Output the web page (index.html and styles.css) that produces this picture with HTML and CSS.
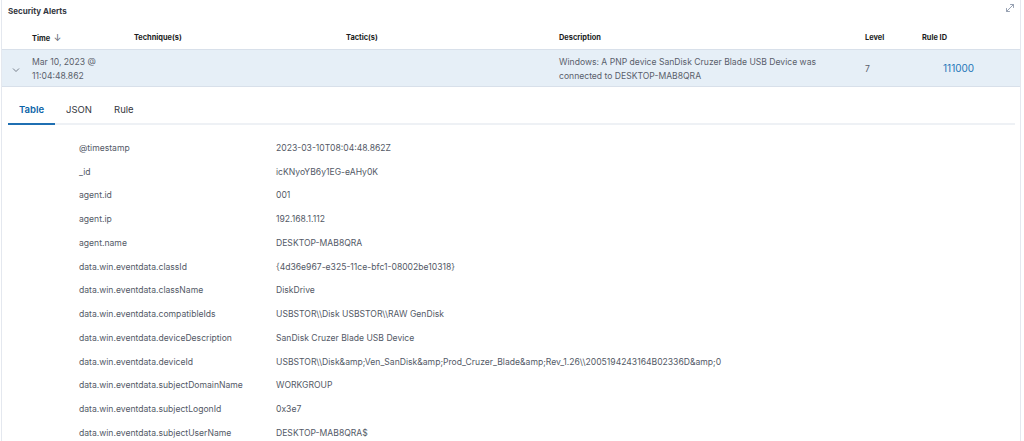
FILE: index.html
```html
<!DOCTYPE html>
<html>
<head>
<meta charset="utf-8">
<link rel="stylesheet" href="styles.css">
</head>
<body>
<div class="panel">
  <div class="panel-head">
    <span class="title">Security Alerts</span>
    <svg class="expand" width="10" height="10" viewBox="0 0 10 10" fill="none" stroke="#98a2b3" stroke-width="1" stroke-linecap="round">
      <path d="M1.5 8.5 L8.5 1.5"/>
      <path d="M5.5 1.5 H8.5 V4.5"/>
      <path d="M1.5 5.5 V8.5 H4.5"/>
    </svg>
  </div>
  <div class="alerts">
    <div class="arow thead">
      <div class="cell"></div>
      <div class="cell">Time <span class="sort">&#8595;</span></div>
      <div class="cell">Technique(s)</div>
      <div class="cell">Tactic(s)</div>
      <div class="cell">Description</div>
      <div class="cell">Level</div>
      <div class="cell">Rule ID</div>
    </div>
    <div class="arow tdata">
      <div class="cell chev">
        <svg width="8" height="6" viewBox="0 0 8 6" fill="none" stroke="#69707d" stroke-width="0.9"><path d="M1 1.5 L4 4.5 L7 1.5"/></svg>
      </div>
      <div class="cell">Mar 10, 2023 @<br>11:04:48.862</div>
      <div class="cell"></div>
      <div class="cell"></div>
      <div class="cell desc">Windows: A PNP device SanDisk Cruzer Blade USB Device was connected to DESKTOP-MAB8QRA</div>
      <div class="cell mid">7</div>
      <div class="cell mid"><span class="link">111000</span></div>
    </div>
  </div>
  <div class="details">
    <div class="tabs">
      <div class="tab active">Table</div>
      <div class="tab">JSON</div>
      <div class="tab">Rule</div>
    </div>
    <div class="kv">
      <div class="kvrow"><span class="k">@timestamp</span><span class="v">2023-03-10T08:04:48.862Z</span></div>
      <div class="kvrow"><span class="k">_id</span><span class="v">icKNyoYB6y1EG-eAHy0K</span></div>
      <div class="kvrow"><span class="k">agent.id</span><span class="v">001</span></div>
      <div class="kvrow"><span class="k">agent.ip</span><span class="v">192.168.1.112</span></div>
      <div class="kvrow"><span class="k">agent.name</span><span class="v">DESKTOP-MAB8QRA</span></div>
      <div class="kvrow"><span class="k">data.win.eventdata.classId</span><span class="v">{4d36e967-e325-11ce-bfc1-08002be10318}</span></div>
      <div class="kvrow"><span class="k">data.win.eventdata.className</span><span class="v">DiskDrive</span></div>
      <div class="kvrow"><span class="k">data.win.eventdata.compatibleIds</span><span class="v">USBSTOR\\Disk USBSTOR\\RAW GenDisk</span></div>
      <div class="kvrow"><span class="k">data.win.eventdata.deviceDescription</span><span class="v">SanDisk Cruzer Blade USB Device</span></div>
      <div class="kvrow"><span class="k">data.win.eventdata.deviceId</span><span class="v">USBSTOR\\Disk&amp;amp;Ven_SanDisk&amp;amp;Prod_Cruzer_Blade&amp;amp;Rev_1.26\\2005194243164B02336D&amp;amp;0</span></div>
      <div class="kvrow"><span class="k">data.win.eventdata.subjectDomainName</span><span class="v">WORKGROUP</span></div>
      <div class="kvrow"><span class="k">data.win.eventdata.subjectLogonId</span><span class="v">0x3e7</span></div>
      <div class="kvrow"><span class="k">data.win.eventdata.subjectUserName</span><span class="v">DESKTOP-MAB8QRA$</span></div>
    </div>
  </div>
</div>
</body>
</html>
```

FILE: styles.css
```css
html, body {
  margin: 0;
  padding: 0;
  background: #ffffff;
}
body {
  font-family: Inter, "Noto Sans", sans-serif;
  color: #535966;
  font-size: 8.6px;
  overflow: hidden;
}
.panel {
  width: 1020px;
  height: 441px;
  margin-left: 1px;
  border-left: 1px solid #e4e8ef;
  border-right: 1px solid #e4e8ef;
  box-sizing: border-box;
  overflow: hidden;
}
.panel-head {
  height: 22px;
  display: flex;
  align-items: center;
  justify-content: space-between;
  padding: 0 5px 0 6px;
}
.title {
  font-weight: 700;
  font-size: 8px;
  color: #343741;
}
.expand {
  margin-top: -6px;
}
.alerts {
  margin-top: 4px;
}
.arow {
  display: grid;
  grid-template-columns: 30px 102px 212px 213px 306px 57px 1fr;
  border-bottom: 1px solid #d8e0ea;
}
.thead {
  height: 23px;
  align-items: center;
  font-weight: 700;
  font-size: 7.4px;
  color: #1a1c21;
}
.sort {
  font-weight: 400;
  font-size: 9px;
  color: #535966;
  margin-left: 2px;
}
.tdata {
  background: #e6eff7;
  height: 37px;
  box-sizing: border-box;
  padding-top: 2px;
  align-items: center;
  line-height: 14px;
  color: #5a606b;
}
.cell {
  min-width: 0;
}
.chev {
  display: flex;
  justify-content: center;
  padding-top: 1px;
  padding-right: 2px;
}
.desc {
  padding-right: 36px;
}
.mid {
  padding-bottom: 1px;
}
.link {
  color: #1f76b8;
  font-size: 10px;
  padding-left: 21px;
}
.details {
  padding: 0 5px 0 6px;
}
.tabs {
  display: flex;
  margin-top: 11px;
  height: 25px;
  border-bottom: 2px solid #eef1f5;
}
.tab {
  padding: 0 11px 0 11px;
  font-size: 9.5px;
  color: #343741;
  line-height: 24px;
  border-bottom: 2px solid transparent;
  margin-bottom: -2px;
}
.tab.active {
  color: #0b64a8;
  font-weight: 600;
  border-bottom-color: #1f6fb2;
}
.kv {
  margin-top: 11px;
}
.kvrow {
  display: flex;
  height: 23.75px;
  align-items: center;
}
.k {
  width: 197px;
  padding-left: 71px;
  flex-shrink: 0;
}
.v {
  white-space: nowrap;
}
```
